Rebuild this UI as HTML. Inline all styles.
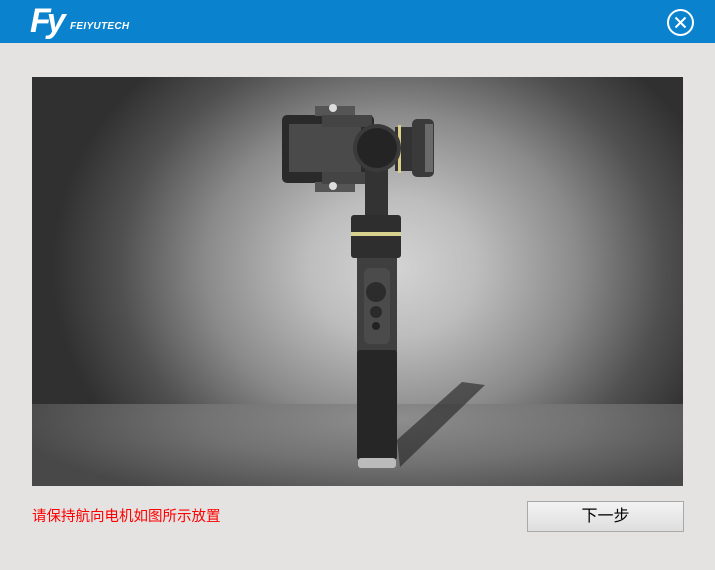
<!DOCTYPE html>
<html><head><meta charset="utf-8"><style>
*{margin:0;padding:0;box-sizing:border-box}
body{width:715px;height:570px;background:#e4e3e1;position:relative;overflow:hidden;font-family:"Liberation Sans","Noto Sans CJK SC",sans-serif}
.hdr{position:absolute;left:0;top:0;width:715px;height:43px;background:#0b82cd}
.logo{position:absolute;left:30px;top:6px;color:#fff;font-style:italic;font-weight:bold}
.logo .fy{font-size:34px;letter-spacing:-4px;line-height:30px}
.logo .t{position:absolute;left:40px;top:15px;font-size:10px;letter-spacing:0.3px;white-space:nowrap}
.close{position:absolute;left:667px;top:9px;width:27px;height:27px;border:2px solid #fff;border-radius:50%}
.pic{position:absolute;left:32px;top:77px;width:651px;height:409px;overflow:hidden;
background:radial-gradient(ellipse 340px 280px at 360px 190px,#d4d4d4 0%,#bdbdbd 25%,#8a8a8a 55%,#505050 80%,#303030 100%)}
.floor{position:absolute;left:0;top:327px;width:651px;height:82px;background:radial-gradient(ellipse 380px 90px at 360px 15px,#8e8e8e 0%,#727272 50%,#484848 100%)}
.msg{position:absolute;left:32px;top:508px;color:#f00;font-size:14.5px;line-height:18px}
.btn{position:absolute;left:527px;top:501px;width:157px;height:31px;border:1px solid #a9a9a9;background:linear-gradient(#f3f3f3,#dedede);font-size:16px;text-align:center;line-height:29px;color:#000}
</style></head><body>
<div class="hdr">
<div class="logo"><span class="fy">Fy</span><span class="t">FEIYUTECH</span></div>
<div class="close"><svg width="23" height="23" viewBox="0 0 23 23" style="position:absolute;left:0;top:0"><path d="M6.5 6.5L16.5 16.5M16.5 6.5L6.5 16.5" stroke="#fff" stroke-width="2"/></svg></div>
</div>
<div class="pic"><div class="floor"></div>
<svg width="651" height="409" viewBox="32 77 651 409" style="position:absolute;left:0;top:0">
<polygon points="397,440 462,382 485,385 400,467" fill="#222" opacity="0.6"/>
<rect x="282" y="115" width="92" height="68" rx="5" fill="#2a2a2a"/>
<rect x="289" y="124" width="72" height="48" fill="#4a4a4a"/>
<rect x="315" y="106" width="40" height="10" fill="#555"/>
<rect x="315" y="182" width="40" height="10" fill="#555"/>
<rect x="322" y="115" width="50" height="12" fill="#444"/>
<rect x="322" y="172" width="50" height="12" fill="#444"/>
<circle cx="333" cy="108" r="4" fill="#ddd"/><circle cx="333" cy="186" r="4" fill="#ddd"/>
<rect x="395" y="127" width="20" height="44" fill="#333"/>
<rect x="398" y="125" width="3" height="48" fill="#d9cf88"/>
<rect x="412" y="119" width="22" height="58" rx="5" fill="#3a3a3a"/>
<rect x="425" y="124" width="8" height="48" fill="#6a6a6a"/>
<rect x="365" y="168" width="23" height="50" fill="#333"/>
<circle cx="377" cy="148" r="24" fill="#3a3a3a"/><circle cx="377" cy="148" r="20" fill="#242424"/>
<rect x="351" y="215" width="50" height="43" rx="3" fill="#2e2e2e"/>
<rect x="351" y="232" width="50" height="4" fill="#d9d28f"/>
<rect x="357" y="258" width="40" height="95" fill="#3f3f3f"/>
<rect x="364" y="268" width="26" height="76" rx="6" fill="#4b4b4b"/>
<circle cx="376" cy="292" r="10" fill="#2c2c2c"/><circle cx="376" cy="312" r="6" fill="#2a2a2a"/><circle cx="376" cy="326" r="4" fill="#222"/>
<rect x="357" y="350" width="40" height="110" rx="3" fill="#262626"/>
<rect x="358" y="458" width="38" height="10" rx="3" fill="#bbb"/>
</svg></div>
<div class="msg">请保持航向电机如图所示放置</div>
<div class="btn">下一步</div>
</body></html>
